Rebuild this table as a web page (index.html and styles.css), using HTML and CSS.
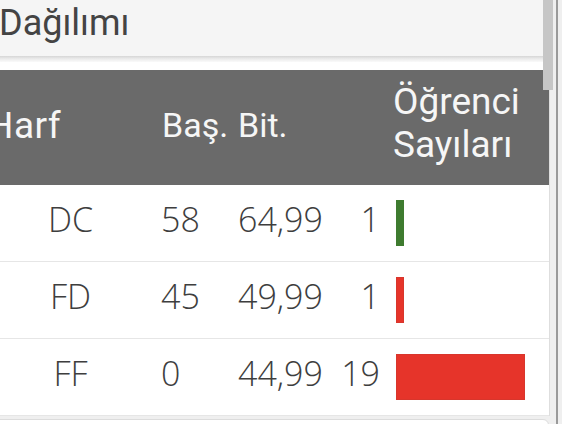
FILE: index.html
```html
<!DOCTYPE html>
<html lang="tr">
<head>
<meta charset="utf-8">
<title>Harf Dağılımı</title>
<link rel="stylesheet" href="styles.css">
</head>
<body>
<div class="screen">
  <div class="card">
    <div class="title">Dağılımı</div>
    <div class="shade"></div>
    <div class="gap"></div>
    <div class="table">
      <div class="row head">
        <div class="c1">Harf</div>
        <div class="c2">Baş.</div>
        <div class="c3">Bit.</div>
        <div class="c4"></div>
        <div class="c5">Öğrenci<br>Sayıları</div>
      </div>
      <div class="row">
        <div class="c1">DC</div>
        <div class="c2">58</div>
        <div class="c3">64,99</div>
        <div class="c4">1</div>
        <div class="c5"><span class="bar green" style="width:8px"></span></div>
      </div>
      <div class="row">
        <div class="c1">FD</div>
        <div class="c2">45</div>
        <div class="c3">49,99</div>
        <div class="c4">1</div>
        <div class="c5"><span class="bar red" style="width:8px"></span></div>
      </div>
      <div class="row">
        <div class="c1">FF</div>
        <div class="c2">0</div>
        <div class="c3">44,99</div>
        <div class="c4">19</div>
        <div class="c5"><span class="bar red" style="width:129px"></span></div>
      </div>
    </div>
  </div>
  <div class="next"></div>
  <div class="thumb"></div>
  <div class="edge"></div>
</div>
</body>
</html>
```

FILE: styles.css
```css
html, body {
  margin: 0;
  padding: 0;
}
body {
  width: 562px;
  height: 424px;
  overflow: hidden;
  background: #efefef;
}
.screen {
  position: relative;
  width: 562px;
  height: 424px;
  overflow: hidden;
}
.card {
  width: 574px;
  margin-left: -24px;
  box-sizing: border-box;
  background: #ffffff;
  border-right: 1px solid #dedede;
}
.title {
  height: 56px;
  box-sizing: border-box;
  padding: 0 0 8px 23px;
  background: #f5f5f5;
  font-family: Roboto, "Noto Sans", sans-serif;
  font-size: 36px;
  line-height: 46px;
  color: #444444;
}
.shade {
  height: 6px;
  background: linear-gradient(#d6d6d6, #ececec 50%, #fafafa);
}
.gap {
  height: 8px;
  background: #ffffff;
}
.table {
  display: flex;
  flex-direction: column;
}
.row {
  display: grid;
  grid-template-columns: 185px 73px 102px 44px 1fr;
  align-items: center;
  height: 77px;
  box-sizing: border-box;
  border-bottom: 1px solid #e6e6e6;
  font-family: "Open Sans", "Noto Sans", sans-serif;
  font-size: 34px;
  font-weight: 300;
  line-height: 46px;
  color: #3e3e3e;
}
.row > div {
  padding-bottom: 8px;
}
.row .c1 {
  text-align: center;
  padding-left: 4px;
}
.row .c3 {
  padding-left: 4px;
}
.row .c4 {
  text-align: right;
}
.row .c5 {
  padding: 0 0 0 16px;
  display: flex;
  align-items: center;
}
.row.head {
  height: 115px;
  border-bottom: none;
  background: #6a6a6a;
  color: #f6f6f6;
  font-family: Roboto, "Noto Sans", sans-serif;
  font-size: 34px;
  font-weight: 400;
  line-height: 43px;
}
.row.head > div {
  padding-bottom: 5px;
}
.row.head .c1 {
  text-align: left;
  padding-left: 11px;
  font-size: 37px;
  letter-spacing: 0.5px;
}
.row.head .c2 {
  padding-left: 1px;
}
.row.head .c3 {
  padding-left: 4px;
}
.row.head .c5 {
  display: block;
  padding: 0 0 10px 13px;
  font-size: 37px;
}
.bar {
  display: block;
  height: 46px;
  box-sizing: border-box;
}
.bar.green {
  background: #3e7b2f;
}
.bar.red {
  background: #e6342a;
  border: 1px solid #d8362c;
}
.next {
  margin: 3px 13px 0 -10px;
  height: 20px;
  background: #ffffff;
  border: 1px solid #dcdcdc;
  border-radius: 6px;
}
.thumb {
  position: absolute;
  left: 543px;
  top: 0;
  width: 10px;
  height: 90px;
  background: #c6c6c6;
}
.edge {
  position: absolute;
  left: 556px;
  top: 0;
  width: 2px;
  height: 424px;
  background: #9a9a9a;
}
```
